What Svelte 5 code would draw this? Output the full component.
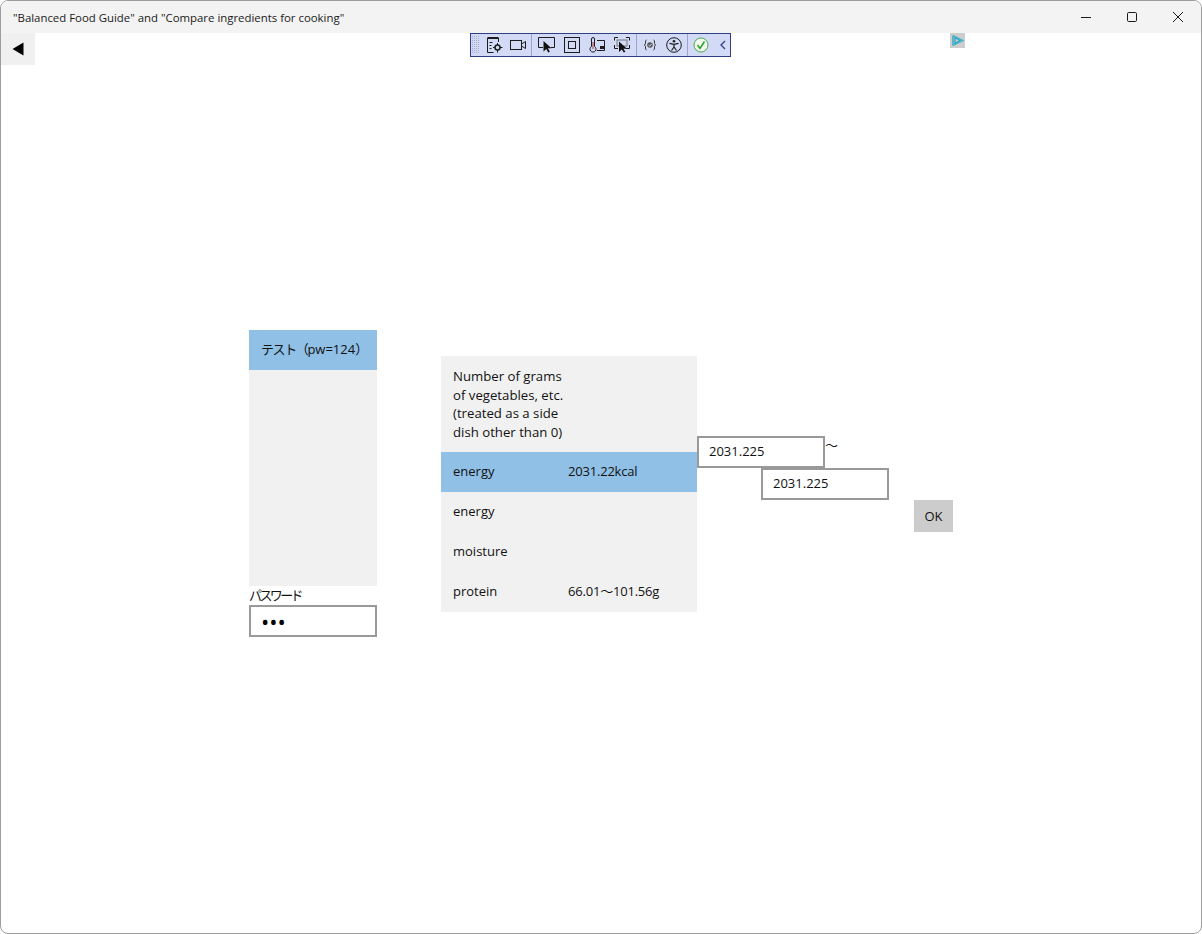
<script>
  const rows = [
    { name: 'energy', value: '2031.22kcal', selected: true },
    { name: 'energy', value: '' },
    { name: 'moisture', value: '' },
    { name: 'protein', value: '66.01～101.56g' }
  ];
</script>

<div class="window">
  <header class="titlebar">
    <span class="title">"Balanced Food Guide" and "Compare ingredients for cooking"</span>
    <div class="controls">
      <button type="button" aria-label="Minimize">
        <svg width="12" height="12" viewBox="0 0 12 12"><path d="M1 6.5h10" stroke="#1a1a1a" fill="none" /></svg>
      </button>
      <button type="button" aria-label="Maximize">
        <svg width="12" height="12" viewBox="0 0 12 12"><rect x="1.5" y="1.5" width="9" height="9" rx="1.2" stroke="#1a1a1a" fill="none" /></svg>
      </button>
      <button type="button" aria-label="Close">
        <svg width="12" height="12" viewBox="0 0 12 12"><path d="M1 1l10 10M11 1L1 11" stroke="#1a1a1a" fill="none" /></svg>
      </button>
    </div>
  </header>

  <div class="page">
    <button type="button" class="back" aria-label="Back">
      <svg width="12" height="14" viewBox="0 0 12 14"><path d="M11.5 .5v13L.5 7z" fill="#000" /></svg>
    </button>

    <main class="columns">
      <section class="users">
        <ul class="user-list">
          <li class="selected"><span class="kana">テスト（</span>pw=124）</li>
        </ul>
        <label class="pw-label" for="pw">パスワード</label>
        <input id="pw" class="field secret" type="password" value="124" />
      </section>

      <section class="nutrients">
        <p class="lead">Number of grams<br />of vegetables, etc.<br />(treated as a side<br />dish other than 0)</p>
        {#each rows as row}
          <div class="row" class:selected={row.selected}>
            <span class="name">{row.name}</span>
            <span class="value">{row.value}</span>
          </div>
        {/each}
      </section>

      <section class="range">
        <div class="from">
          <input class="field" type="text" value="2031.225" />
          <span class="tilde">～</span>
        </div>
        <input class="field to" type="text" value="2031.225" />
        <button type="button" class="ok">OK</button>
      </section>
    </main>
  </div>

  <!-- debug toolbar floats over the page -->
  <div class="toolbar">
    <svg class="grip" width="7" height="18" viewBox="0 0 7 18">
      {#each Array(9) as _, i}
        <path d="M0 {i * 2 + .5}h7" stroke="#a4abc8" stroke-dasharray="1 1" fill="none" />
      {/each}
    </svg>

    <svg class="ic first" width="16" height="16" viewBox="0 0 16 16" fill="none" stroke="#1c1c1c">
      <path d="M.5 1h11" stroke-width="2" />
      <path d="M.5 1v14.500h6M11.500 1v4M2.500 5.500h3M2.500 8.500h2M2.500 11.500h2" />
      <circle cx="10.500" cy="10.500" r="2.500" stroke-width="1.500" />
      <path d="M10.500 6v2M10.500 13v2.500M6 10.500h2M13 10.500h2.500" />
    </svg>
    <svg class="ic cam" width="16" height="16" viewBox="0 0 16 16" fill="none" stroke="#1c1c1c">
      <rect x=".5" y="3.500" width="11" height="9" />
      <path d="M11.500 7l4-2.500v7l-4-2.500" />
    </svg>
    <i class="sep one"></i>
    <svg class="ic sel" width="18" height="16" viewBox="0 0 18 16" fill="none" stroke="#1c1c1c">
      <path d="M5 10.500H.5v-10h16v10H13" />
      <path d="M5.500 4v10.500l2.800-2.500 2 3.500 1.600-.8-2-3.500h3.600z" fill="#111" stroke="none" />
    </svg>
    <svg class="ic box" width="16" height="16" viewBox="0 0 16 16" fill="none" stroke="#1c1c1c">
      <rect x=".5" y=".5" width="15" height="15" />
      <rect x="4.500" y="4.500" width="7" height="7" />
    </svg>
    <svg class="ic thermo" width="16" height="16" viewBox="0 0 16 16" fill="none" stroke="#1c1c1c">
      <path d="M2.500 9.500V2a1.500 1.500 0 0 1 3 0v7.500a3 3 0 1 1-3 0z" />
      <path d="M4 5v7" stroke="#a33" />
      <path d="M8 3.500h7.500v10H8" />
      <rect x="11" y="9" width="4" height="3" fill="#1c1c1c" stroke="none" />
    </svg>
    <svg class="ic frame" width="16" height="16" viewBox="0 0 16 16" fill="none" stroke="#1c1c1c">
      <path d="M4 .5H.5v3M12 .5h3.500v3M.5 8v3.500H4M15.500 8v3.500H12" />
      <rect x="3" y="3" width="10" height="6" stroke="#777" />
      <path d="M5 4.500v10.500l2.800-2.500 2 3 1.600-.8-2-3h3.600z" fill="#111" stroke="none" />
    </svg>
    <i class="sep two"></i>
    <svg class="ic hot" width="12" height="12" viewBox="0 0 12 12" fill="none" stroke="#333">
      <path d="M2.500 1Q1.500 1 1.500 3v1.500L.5 6l1 1.500V9q0 2 1 2M9.500 1q1 0 1 2v1.500l1 1.500-1 1.500V9q0 2-1 2" />
      <circle cx="6" cy="6" r="2.800" fill="#555" stroke="none" />
      <path d="M4.500 6.200l1.200 1 2-2.400" stroke="#dfe4f7" />
    </svg>
    <svg class="ic person" width="16" height="16" viewBox="0 0 16 16" fill="none" stroke="#1c1c1c">
      <circle cx="8" cy="8" r="7.300" />
      <circle cx="8" cy="4.200" r="1.300" fill="#1c1c1c" stroke="none" />
      <path d="M3.500 6.300L8 7.300l4.500-1M8 7.300v3M8 10l-2.500 3.500M8 10l2.500 3.500" stroke-width="1.200" />
    </svg>
    <i class="sep three"></i>
    <svg class="ic ok-ic" width="16" height="16" viewBox="0 0 16 16" fill="none">
      <circle cx="8" cy="8" r="7" fill="#f1f8ee" stroke="#4aa84a" />
      <path d="M4.500 8l2.500 3.500L11.500 4.500" stroke="#2e9e2e" stroke-width="1.500" />
    </svg>
    <svg class="ic fold" width="6" height="10" viewBox="0 0 6 10" fill="none">
      <path d="M5 1L1 5l4 4" stroke="#30408a" stroke-width="1.300" />
    </svg>
  </div>

  <div class="adchoice">
    <svg width="13" height="13" viewBox="0 0 13 13" fill="none" stroke="#1ea6c6" stroke-width="1.300">
      <path d="M2 1.500v10M4 3.500v6l5-3z" />
      <path d="M2 1.500l10 5-10 5" stroke="#3fb4ce" />
    </svg>
  </div>

  <i class="peek a"></i>
  <i class="peek b"></i>
</div>

<style>
  :global(body) {
    background: #fff;
  }

  .window {
    position: relative;
    box-sizing: border-box;
    width: 1202px;
    height: 934px;
    border: 1px solid #9e9e9e;
    border-radius: 8px;
    overflow: hidden;
    background: #fff;
    font-family: "Open Sans", "Noto Sans CJK JP", sans-serif;
    font-size: 13px;
    color: #111;
  }

  .titlebar {
    display: flex;
    align-items: center;
    justify-content: space-between;
    height: 32px;
    padding-left: 12px;
    background: #f3f3f3;
  }

  .title {
    font-size: 11.4px;
    color: #1a1a1a;
  }

  .controls {
    display: flex;
    align-self: stretch;
  }

  .controls button {
    display: grid;
    place-items: center;
    width: 46px;
    padding: 0;
    border: 0;
    background: none;
  }

  .page {
    display: flex;
    flex-direction: column;
    align-items: flex-start;
  }

  .back {
    display: grid;
    place-items: center;
    width: 34px;
    height: 32px;
    padding: 0;
    border: 0;
    background: #f0f0f0;
  }

  .columns {
    display: flex;
    align-items: flex-start;
    margin: 265px 0 0 248px;
  }

  .users {
    display: flex;
    flex-direction: column;
    width: 128px;
    margin-right: 64px;
  }

  .user-list {
    height: 256px;
    margin: 0;
    padding: 0;
    list-style: none;
    background: #f1f1f1;
  }

  .user-list li {
    height: 40px;
    padding-left: 12px;
    line-height: 38px;
  }

  .kana {
    letter-spacing: -1.4px;
  }

  .selected {
    background: #90c0e6;
  }

  .pw-label {
    height: 19px;
    line-height: 19px;
    font-size: 13px;
    letter-spacing: -2.6px;
  }

  .field {
    box-sizing: border-box;
    width: 128px;
    height: 32px;
    padding: 0 10px 2px;
    border: 2px solid #999;
    border-radius: 0;
    outline: none;
    background: #fff;
    font: inherit;
    color: #111;
  }

  .secret {
    padding: 0 10px;
    font-size: 22px;
    color: #000;
  }

  .nutrients {
    width: 256px;
    margin-top: 26px;
    background: #f1f1f1;
  }

  .lead {
    height: 76px;
    margin: 0;
    padding: 11px 12px 9px;
    font-size: 13.2px;
    line-height: 18.6px;
  }

  .row {
    display: flex;
    align-items: center;
    box-sizing: border-box;
    height: 40px;
    padding: 0 0 2px 12px;
    line-height: 18px;
  }

  .name {
    width: 115px;
  }

  .value {
    letter-spacing: -0.2px;
  }

  .range {
    display: flex;
    flex-direction: column;
    align-items: flex-start;
    margin-top: 106px;
  }

  .from {
    display: flex;
  }

  .tilde {
    line-height: 18px;
    height: 18px;
    font-size: 13px;
  }

  .to {
    margin-left: 64px;
  }

  .ok {
    width: 39px;
    height: 32px;
    margin-left: 217px;
    padding: 0;
    border: 0;
    background: #ccc;
    font: inherit;
    color: #111;
  }

  .toolbar {
    position: absolute;
    top: 32px;
    left: 469px;
    display: flex;
    align-items: center;
    box-sizing: border-box;
    width: 261px;
    height: 24px;
    border: 1px solid #2f3f86;
    background: #d3daf6;
  }

  .grip {
    margin-left: 1px;
  }

  .ic {
    flex: none;
  }

  .first { margin-left: 8px; }
  .cam { margin-left: 7px; }
  .sel { margin-left: 6px; }
  .box { margin-left: 8px; }
  .thermo { margin-left: 9px; }
  .frame { margin-left: 9px; }
  .hot { margin-left: 7px; }
  .person { margin-left: 10px; }
  .ok-ic { margin-left: 5px; }
  .fold { margin-left: 11px; }

  .sep {
    flex: none;
    width: 1px;
    height: 22px;
    background: #9aa6cc;
  }

  .sep.one { margin-left: 5px; }
  .sep.two { margin-left: 6px; }
  .sep.three { margin-left: 5px; }

  .adchoice {
    position: absolute;
    top: 32px;
    left: 949px;
    display: grid;
    place-items: center;
    width: 15px;
    height: 15px;
    background: #cdcdcd;
  }

  .peek {
    position: absolute;
    left: -1px;
    width: 1px;
    height: 6px;
    background: #1f6fb0;
  }

  .peek.a { top: 189px; }
  .peek.b { top: 228px; }
</style>
